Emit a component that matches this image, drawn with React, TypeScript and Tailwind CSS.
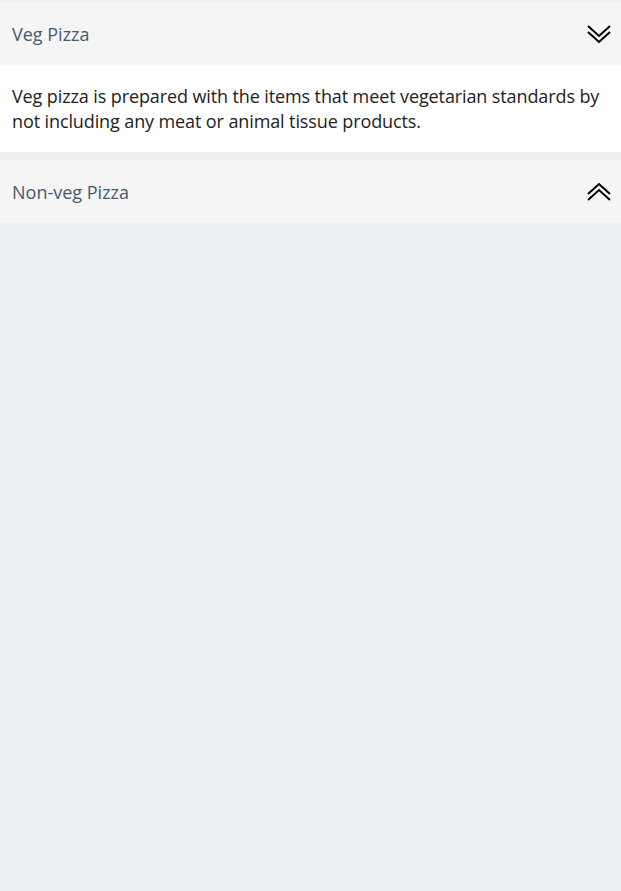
const items = [
  {
    title: 'Veg Pizza',
    body: 'Veg pizza is prepared with the items that meet vegetarian standards by not including any meat or animal tissue products.',
    open: true,
  },
  {
    title: 'Non-veg Pizza',
    body: '',
    open: false,
  },
];

function Chevrons({ down }: { down: boolean }) {
  return (
    <svg width="24" height="20" viewBox="0 0 24 20" fill="none" stroke="#000" strokeWidth="2">
      {down ? (
        <>
          <path d="M1 2 L12 12 L23 2" />
          <path d="M1 8 L12 18 L23 8" />
        </>
      ) : (
        <>
          <path d="M1 12 L12 2 L23 12" />
          <path d="M1 18 L12 8 L23 18" />
        </>
      )}
    </svg>
  );
}

export default function App() {
  return (
    <div
      className="min-h-screen bg-[#ecf0f3] pt-[2px] flex flex-col gap-2"
      style={{ fontFamily: '"Segoe UI", "Open Sans", sans-serif' }}
    >
      {items.map((it) => (
        <div key={it.title}>
          <div className="h-[63px] bg-[#f5f5f5] flex items-center justify-between pl-3 pr-[10px]">
            <span className="text-[18px] text-[#485a6b] pt-[2px]">{it.title}</span>
            <Chevrons down={it.open} />
          </div>
          {it.open && (
            <div className="bg-white px-3 pt-[19px] pb-[18px] text-[18px] tracking-[-0.11px] leading-[25px] text-[#222]">
              {it.body}
            </div>
          )}
        </div>
      ))}
    </div>
  );
}
